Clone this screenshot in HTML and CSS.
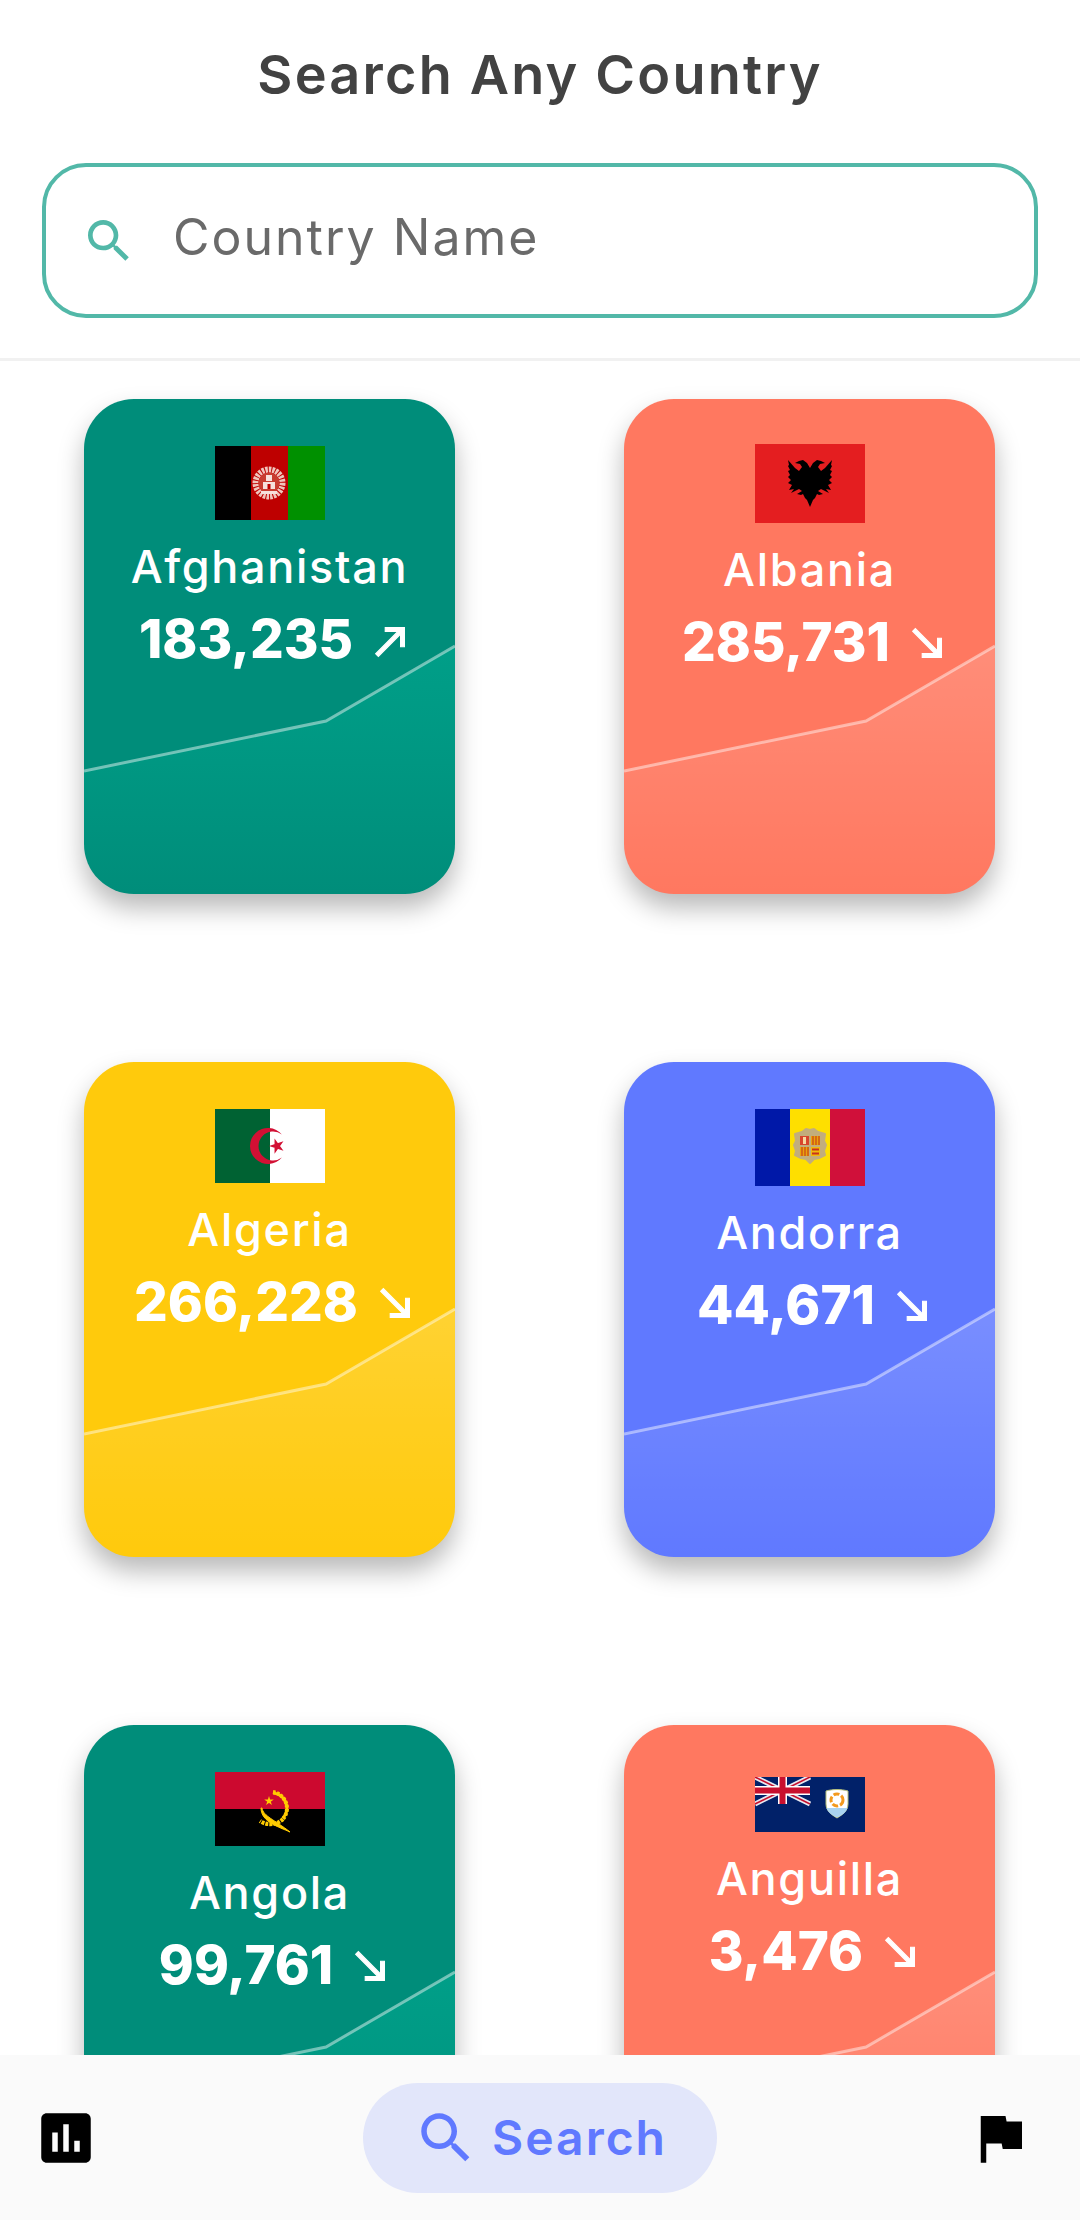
FILE: index.html
```html
<!DOCTYPE html>
<html lang="en">
<head>
    <meta charset="UTF-8">
    <meta name="viewport" content="width=device-width, initial-scale=1.0">
    <title>Search Any Country</title>
    <link rel="stylesheet" href="styles.css">
</head>
<body>
    <header class="top">
        <h1>Search Any Country</h1>
        <div class="search-box">
            <svg class="search-icon" viewBox="0 0 24 24"><path d="M15.5 14h-.79l-.28-.27C15.41 12.59 16 11.11 16 9.5 16 5.91 13.09 3 9.5 3S3 5.91 3 9.5 5.91 16 9.5 16c1.61 0 3.09-.59 4.23-1.57l.27.28v.79l5 4.99L20.49 19l-4.99-5zm-6 0C7.01 14 5 11.99 5 9.5S7.01 5 9.5 5 14 7.01 14 9.5 11.99 14 9.5 14z"/></svg>
            <input type="text" placeholder="Country Name">
        </div>
    </header>

    <main class="cards">
        <!-- Afghanistan -->
        <div class="card teal">
            <svg class="chart" viewBox="0 0 371 495">
                <defs>
                    <linearGradient id="chartFill" x1="0" y1="0" x2="0" y2="1">
                        <stop offset="0" stop-color="#fff" stop-opacity="0.16"/>
                        <stop offset="0.4" stop-color="#fff" stop-opacity="0.09"/>
                        <stop offset="1" stop-color="#fff" stop-opacity="0"/>
                    </linearGradient>
                    <linearGradient id="chartFillTeal" x1="0" y1="0" x2="0" y2="1">
                        <stop offset="0" stop-color="#00a68e" stop-opacity="0.7"/>
                        <stop offset="0.4" stop-color="#00a68e" stop-opacity="0.45"/>
                        <stop offset="1" stop-color="#00a68e" stop-opacity="0"/>
                    </linearGradient>
                </defs>
                <path class="area" d="M0 372L242 322L371 247V495H0Z"/>
                <path class="line" d="M0 372L242 322L371 247"/>
            </svg>
            <svg class="flag" width="110" height="74" viewBox="0 0 110 74">
                <rect width="36" height="74" fill="#000"/>
                <rect x="36" width="37" height="74" fill="#be0000"/>
                <rect x="73" width="37" height="74" fill="#009000"/>
                <circle cx="54" cy="37" r="13.500" fill="none" stroke="#f0c4bc" stroke-width="6" stroke-dasharray="2.500 1"/>
                <circle cx="54" cy="37" r="10.500" fill="#c83c30"/>
                <path d="M46 45h16v3H46zM48 36h12v7H48zM51 29h6v6h-6z" fill="#f6e0dc"/>
                <rect x="52.500" y="38" width="3" height="5" fill="#be0000"/>
            </svg>
            <div class="name">Afghanistan</div>
            <div class="count">183,235
                <svg class="trend" viewBox="0 0 24 24"><path d="M9 5v2h6.59L4 18.59 5.41 20 17 8.41V15h2V5z"/></svg>
            </div>
        </div>

        <!-- Albania -->
        <div class="card coral">
            <svg class="chart" viewBox="0 0 371 495">
                <path class="area" d="M0 372L242 322L371 247V495H0Z"/>
                <path class="line" d="M0 372L242 322L371 247"/>
            </svg>
            <svg class="flag flag-albania" width="110" height="79" viewBox="0 0 110 79">
                <rect width="110" height="79" fill="#e41e20"/>
                <path d="M55 24L52 19L48 16L44 17L40 19L45 20L47 23L44 27L40 24L33 16L34 21L33 22L35 26L33 27L35 31L33 33L36 36L33 39L37 41L34 46L39 45L36 49L44 45L47 47L42 50L46 51L48 50L50 54L52 56L55 63Z" fill="#000"/>
                <path d="M55 24L52 19L48 16L44 17L40 19L45 20L47 23L44 27L40 24L33 16L34 21L33 22L35 26L33 27L35 31L33 33L36 36L33 39L37 41L34 46L39 45L36 49L44 45L47 47L42 50L46 51L48 50L50 54L52 56L55 63Z" fill="#000" transform="matrix(-1 0 0 1 110 0)"/>
            </svg>
            <div class="name">Albania</div>
            <div class="count">285,731
                <svg class="trend" viewBox="0 0 24 24"><path d="M19 9h-2v6.59L5.41 4 4 5.41 15.59 17H9v2h10z"/></svg>
            </div>
        </div>

        <!-- Algeria -->
        <div class="card yellow">
            <svg class="chart" viewBox="0 0 371 495">
                <path class="area" d="M0 372L242 322L371 247V495H0Z"/>
                <path class="line" d="M0 372L242 322L371 247"/>
            </svg>
            <svg class="flag" width="110" height="74" viewBox="0 0 110 74">
                <rect width="55" height="74" fill="#006233"/>
                <rect x="55" width="55" height="74" fill="#fff"/>
                <path d="M66.875 25.53A18 18 0 1 0 66.875 48.47A14.5 14.5 0 1 1 66.875 25.53Z" fill="#d21034"/>
                <polygon points="62,29 66.7,43.5 54.4,34.5 69.6,34.5 57.3,43.5" fill="#d21034" transform="rotate(-18 62 37)"/>
            </svg>
            <div class="name">Algeria</div>
            <div class="count">266,228
                <svg class="trend" viewBox="0 0 24 24"><path d="M19 9h-2v6.59L5.41 4 4 5.41 15.59 17H9v2h10z"/></svg>
            </div>
        </div>

        <!-- Andorra -->
        <div class="card blue">
            <svg class="chart" viewBox="0 0 371 495">
                <path class="area" d="M0 372L242 322L371 247V495H0Z"/>
                <path class="line" d="M0 372L242 322L371 247"/>
            </svg>
            <svg class="flag" width="110" height="77" viewBox="0 0 110 77">
                <rect width="35" height="77" fill="#0018a8"/>
                <rect x="35" width="40" height="77" fill="#fedf00"/>
                <rect x="75" width="35" height="77" fill="#d0103a"/>
                <path d="M40 25l7-2 4-3 4 1 4-1 4 3 7 2-1 7 2 4-2 6 1 4-6 3-5 1-4 4-4-4-5-1-6-3 1-4-2-6 2-4z" fill="#c2ad7c" stroke="#c2ad7c" stroke-width="2" stroke-linejoin="round"/>
                <rect x="45" y="27" width="9" height="9" fill="#d8452c"/>
                <rect x="48" y="28" width="3" height="7" fill="#f6d9a0"/>
                <rect x="56" y="27" width="9" height="9" fill="#e9a30c"/>
                <path d="M58 27v9M61 27v9M64 27v9" stroke="#c8421c" stroke-width="1.200"/>
                <rect x="45" y="38" width="9" height="9" fill="#e9a30c"/>
                <path d="M47 38v9M50 38v9M53 38v9" stroke="#c8421c" stroke-width="1.200"/>
                <rect x="56" y="38" width="9" height="9" fill="#f0b90c"/>
                <path d="M57 40.500h7M57 44.500h7" stroke="#c8321c" stroke-width="2"/>
            </svg>
            <div class="name">Andorra</div>
            <div class="count">44,671
                <svg class="trend" viewBox="0 0 24 24"><path d="M19 9h-2v6.59L5.41 4 4 5.41 15.59 17H9v2h10z"/></svg>
            </div>
        </div>

        <!-- Angola -->
        <div class="card teal">
            <svg class="chart" viewBox="0 0 371 495">
                <path class="area" d="M0 372L242 322L371 247V495H0Z"/>
                <path class="line" d="M0 372L242 322L371 247"/>
            </svg>
            <svg class="flag" width="110" height="74" viewBox="0 0 110 74">
                <rect width="110" height="37" fill="#cc092f"/>
                <rect y="37" width="110" height="37" fill="#000"/>
                <path d="M58 21A15 15 0 0 1 68 46" fill="none" stroke="#ffcb00" stroke-width="3"/>
                <path d="M58 20A16.500 16.500 0 0 1 68 47" fill="none" stroke="#ffcb00" stroke-width="4" stroke-dasharray="2.500 1.500"/>
                <path d="M68 47C62 53 52 54 45 49" fill="none" stroke="#ffcb00" stroke-width="4" stroke-dasharray="3 1"/>
                <path d="M47 36C48 44 60 48 75 60C64 55 46 50 46 36Z" fill="#ffcb00" stroke="#ffcb00"/>
                <polygon points="54,24 56.900,33 49.200,27.400 58.800,27.400 51.100,33" fill="#ffcb00"/>
            </svg>
            <div class="name">Angola</div>
            <div class="count">99,761
                <svg class="trend" viewBox="0 0 24 24"><path d="M19 9h-2v6.59L5.41 4 4 5.41 15.59 17H9v2h10z"/></svg>
            </div>
        </div>

        <!-- Anguilla -->
        <div class="card coral">
            <svg class="chart" viewBox="0 0 371 495">
                <path class="area" d="M0 372L242 322L371 247V495H0Z"/>
                <path class="line" d="M0 372L242 322L371 247"/>
            </svg>
            <svg class="flag flag-anguilla" width="110" height="55" viewBox="0 0 110 55">
                <rect width="110" height="55" fill="#012169"/>
                <path d="M0 0L55 27M55 0L0 27" stroke="#e8e8f0" stroke-width="5"/>
                <path d="M0 0L55 27M55 0L0 27" stroke="#c8102e" stroke-width="1.600"/>
                <path d="M27.500 0V27M0 13.500H55" stroke="#fff" stroke-width="9"/>
                <path d="M27.500 0V27M0 13.500H55" stroke="#c8102e" stroke-width="6"/>
                <path d="M71 14C78 12 86 12 93 14V27C93 34 87 38 82 41C77 38 71 34 71 27Z" fill="#fff" stroke="#b5bf7a"/>
                <path d="M71.500 31H92.500C91 36 86 38.500 82 40.500C78 38.500 73 36 71.500 31Z" fill="#a9d3f0"/>
                <circle cx="82" cy="23" r="6" fill="none" stroke="#f39a1e" stroke-width="3" stroke-dasharray="6 2"/>
            </svg>
            <div class="name">Anguilla</div>
            <div class="count">3,476
                <svg class="trend" viewBox="0 0 24 24"><path d="M19 9h-2v6.59L5.41 4 4 5.41 15.59 17H9v2h10z"/></svg>
            </div>
        </div>
    </main>

    <nav class="bottom-nav">
        <svg class="nav-icon" viewBox="0 0 24 24"><path d="M19 3H5c-1.100 0-2 .9-2 2v14c0 1.100.9 2 2 2h14c1.100 0 2-.9 2-2V5c0-1.100-.9-2-2-2zM9 17H7v-7h2v7zm4 0h-2V7h2v10zm4 0h-2v-4h2v4z"/></svg>
        <div class="nav-active">
            <svg class="nav-icon" viewBox="0 0 24 24"><path d="M15.5 14h-.79l-.28-.27C15.41 12.59 16 11.11 16 9.5 16 5.91 13.09 3 9.5 3S3 5.91 3 9.5 5.91 16 9.5 16c1.61 0 3.09-.59 4.23-1.57l.27.28v.79l5 4.99L20.49 19l-4.99-5zm-6 0C7.01 14 5 11.99 5 9.5S7.01 5 9.5 5 14 7.01 14 9.5 11.99 14 9.5 14z"/></svg>
            <span>Search</span>
        </div>
        <svg class="nav-icon nav-flag" viewBox="0 0 24 24"><path d="M14.400 6L14 4H5v17h2v-7h5.600l.4 2h7V6z"/></svg>
    </nav>
</body>
</html>
```

FILE: styles.css
```css
body {
    margin: 0;
    padding: 0;
    font-family: Inter, "Open Sans", sans-serif;
    background-color: white;
    height: 2220px;
    display: flex;
    flex-direction: column;
    overflow: hidden;
}

.top {
    height: 361px;
    box-sizing: border-box;
    padding: 42px 42px 0 42px;
    border-bottom: 3px solid #f1f1f1;
}

h1 {
    margin: 0;
    font-size: 54px;
    font-weight: 600;
    line-height: 66px;
    letter-spacing: 2.2px;
    color: #424242;
    text-align: center;
}

.search-box {
    margin-top: 55px;
    height: 155px;
    box-sizing: border-box;
    border: 4px solid #52b8a8;
    border-radius: 44px;
    display: flex;
    align-items: center;
    padding-left: 35px;
}

.search-icon {
    width: 56px;
    height: 56px;
    fill: #52b8a8;
}

.search-box input {
    flex: 1;
    border: none;
    outline: none;
    margin: 0 0 8px 36px;
    padding: 0;
    font-family: inherit;
    font-size: 50px;
    font-weight: 400;
    letter-spacing: 2px;
    background: transparent;
}

.search-box input::placeholder {
    color: #6a6a6a;
    opacity: 1;
}

.cards {
    flex: 1;
    min-height: 0;
    overflow: hidden;
    padding: 38px 85px 0 84px;
    display: grid;
    grid-template-columns: 371px 371px;
    grid-auto-rows: 495px;
    column-gap: 169px;
    row-gap: 168px;
}

.card {
    position: relative;
    overflow: hidden;
    border-radius: 50px;
    box-shadow: 0 14px 26px rgba(0, 0, 0, 0.28);
    color: white;
    text-align: center;
}

.teal { background-color: #008d7a; }
.coral { background-color: #ff7860; }
.yellow { background-color: #ffca0c; }
.blue { background-color: #6079ff; }

.chart {
    position: absolute;
    top: 0;
    left: 0;
    width: 371px;
    height: 495px;
}

.area { fill: url(#chartFill); }
.teal .area { fill: url(#chartFillTeal); }

.line {
    fill: none;
    stroke: rgba(255, 255, 255, 0.45);
    stroke-width: 3;
}

.flag {
    position: relative;
    display: block;
    margin: 47px auto 0;
}

.flag-albania { margin-top: 45px; }
.flag-anguilla { margin-top: 52px; }

.name {
    position: relative;
    margin-top: 17px;
    font-size: 45px;
    font-weight: 500;
    line-height: 60px;
    letter-spacing: 1.7px;
}

.count {
    position: relative;
    margin-top: 11px;
    padding-left: 14px;
    display: flex;
    align-items: center;
    justify-content: center;
    gap: 15px;
    font-size: 53px;
    font-weight: 800;
    line-height: 62px;
}

.trend {
    width: 46px;
    height: 46px;
    margin-top: 4px;
    fill: white;
    stroke: white;
    stroke-width: 0.6;
}

.bottom-nav {
    flex: none;
    position: relative;
    height: 165px;
    box-sizing: border-box;
    background-color: #fafafa;
    display: grid;
    grid-template-columns: 1fr auto 1fr;
    align-items: center;
    padding: 0 33px;
}

.nav-icon {
    width: 66px;
    height: 66px;
    fill: black;
}

.nav-flag {
    justify-self: end;
    margin-right: 14px;
}

.nav-active {
    width: 354px;
    height: 110px;
    box-sizing: border-box;
    border-radius: 55px;
    background-color: #e2e6fa;
    display: flex;
    align-items: center;
    padding-left: 50px;
    gap: 13px;
    color: #6079ff;
    font-size: 48px;
    font-weight: 600;
    letter-spacing: 2px;
}

.nav-active .nav-icon {
    fill: #6079ff;
}
```
